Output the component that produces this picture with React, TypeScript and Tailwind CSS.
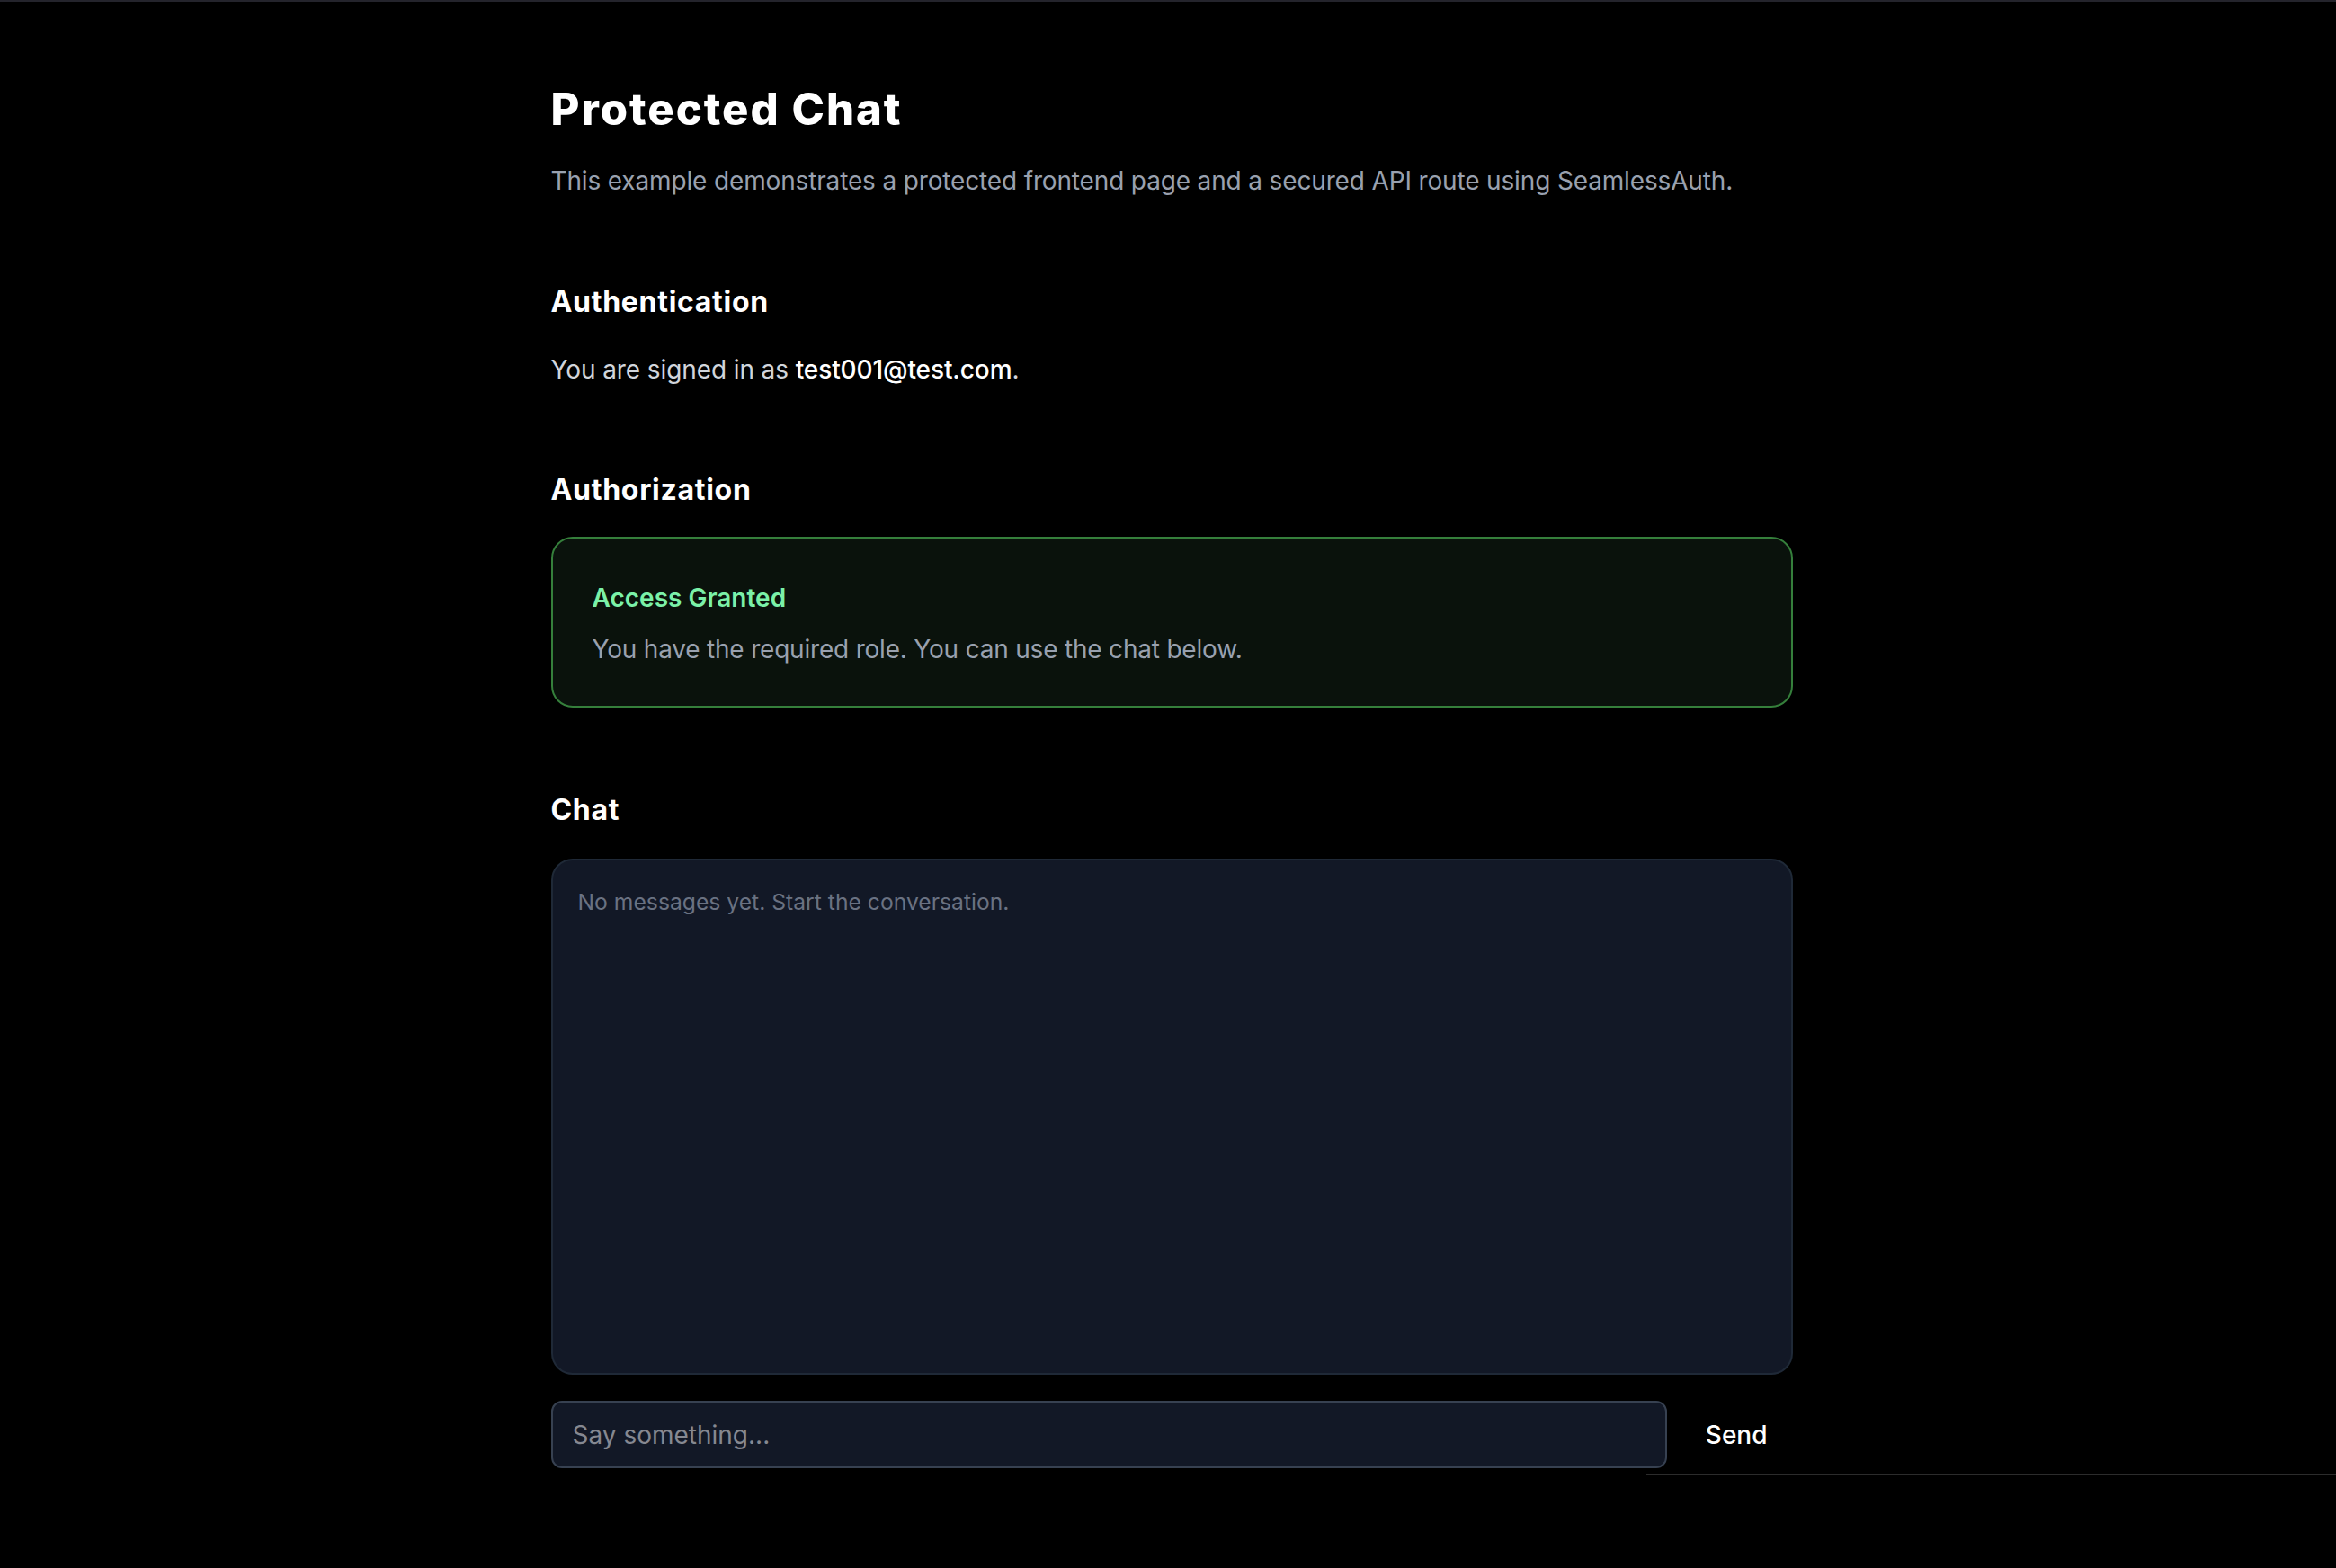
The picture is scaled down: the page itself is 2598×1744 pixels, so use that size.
import { useState } from "react";

type Message = { id: number; text: string };

function SectionHeading({ children, className = "" }: { children: React.ReactNode; className?: string }) {
  return (
    <h2 className={`text-[32px] leading-[48px] font-bold tracking-[0.7px] text-white ${className}`}>
      {children}
    </h2>
  );
}

export default function App() {
  const [messages, setMessages] = useState<Message[]>([]);
  const [draft, setDraft] = useState("");

  const send = () => {
    if (!draft.trim()) return;
    setMessages((m) => [...m, { id: Date.now(), text: draft.trim() }]);
    setDraft("");
  };

  return (
    <div
      className="relative min-h-screen bg-black text-white border-t-2 border-[#24242c]"
      style={{ fontFamily: "Inter, 'Noto Sans', sans-serif" }}
    >
      <div className="flex justify-center pl-[8px]">
        <main className="w-[1381px] pt-[88px] pb-[40px]">
          <h1 className="text-[49px] leading-[64px] font-extrabold tracking-[2px] text-white">
            Protected Chat
          </h1>
          <p className="mt-[27px] text-[28px] leading-[40px] tracking-[-0.15px] text-gray-400">
            This example demonstrates a protected frontend page and a secured API route using SeamlessAuth.
          </p>

          <SectionHeading className="mt-[91px]">Authentication</SectionHeading>
          <p className="mt-[31px] text-[28px] leading-[40px] tracking-[-0.1px] text-gray-300">
            You are signed in as <span className="font-medium text-white">test001@test.com</span>.
          </p>

          <SectionHeading className="mt-[90px]">Authorization</SectionHeading>
          <div className="mt-[28px] rounded-[24px] border-2 border-[#357f3b] bg-[#0a120c] pl-[44px] pr-[44px] pt-[46px] pb-[43px]">
            <p className="text-[28px] leading-[40px] font-semibold text-green-300">Access Granted</p>
            <p className="mt-[17px] text-[28px] leading-[40px] tracking-[-0.2px] text-gray-400">
              You have the required role. You can use the chat below.
            </p>
          </div>

          <SectionHeading className="mt-[90px]">Chat</SectionHeading>
          <div className="mt-[30px] h-[574px] overflow-y-auto rounded-[24px] border-2 border-[#1f2937] bg-[#121826] pl-[28px] pr-[28px] pt-[30px]">
            {messages.length === 0 ? (
              <p className="text-[24.7px] leading-[32px] text-gray-500">
                No messages yet. Start the conversation.
              </p>
            ) : (
              <div className="flex flex-col gap-4">
                {messages.map((m) => (
                  <p key={m.id} className="text-[28px] leading-[40px] text-gray-200">
                    {m.text}
                  </p>
                ))}
              </div>
            )}
          </div>

          <div className="mt-[29px] flex items-center gap-[15px]">
            <input
              value={draft}
              onChange={(e) => setDraft(e.target.value)}
              onKeyDown={(e) => e.key === "Enter" && send()}
              placeholder="Say something..."
              className="h-[75px] flex-1 rounded-[12px] border-2 border-[#374151] bg-[#121826] px-[22px] text-[28px] text-gray-100 outline-none placeholder:text-[#858891]"
            />
            <button
              onClick={send}
              className="px-[28px] text-[28px] leading-[40px] font-medium text-white"
            >
              Send
            </button>
          </div>
        </main>
      </div>

      <div className="absolute left-[1831px] right-0 top-[1638px] h-px bg-[#2c2c2c]" />
    </div>
  );
}
